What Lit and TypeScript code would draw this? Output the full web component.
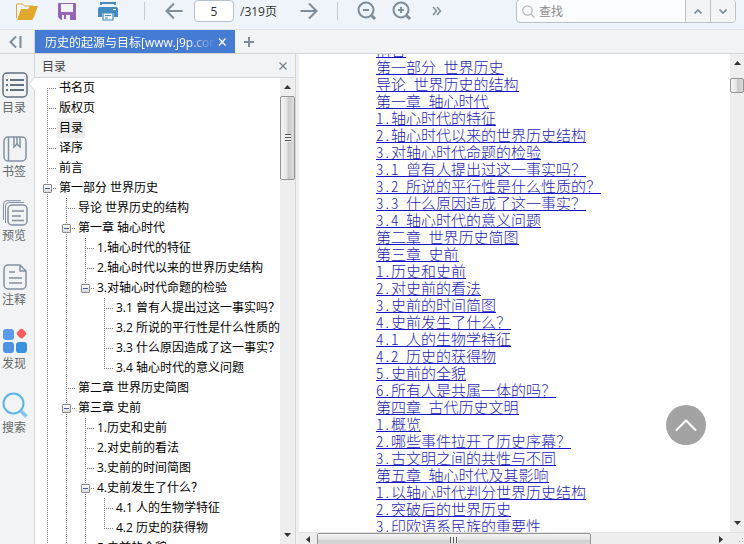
import { LitElement, html, css, svg, nothing } from "lit";
import { customElement, property } from "lit/decorators.js";
import { classMap } from "lit/directives/class-map.js";

interface TreeNode {
  label: string;
  selected?: boolean;
  children?: TreeNode[];
}

interface TreeRow {
  label: string;
  selected: boolean;
  expanded: boolean;
  /** One entry per level: whether that level's guide goes on below this row. */
  guides: boolean[];
}

const OUTLINE: TreeNode[] = [
  { label: "书名页" },
  { label: "版权页" },
  { label: "目录", selected: true },
  { label: "译序" },
  { label: "前言" },
  {
    label: "第一部分 世界历史",
    children: [
      { label: "导论 世界历史的结构" },
      {
        label: "第一章 轴心时代",
        children: [
          { label: "1.轴心时代的特征" },
          { label: "2.轴心时代以来的世界历史结构" },
          {
            label: "3.对轴心时代命题的检验",
            children: [
              { label: "3.1 曾有人提出过这一事实吗？" },
              { label: "3.2 所说的平行性是什么性质的？" },
              { label: "3.3 什么原因造成了这一事实？" },
              { label: "3.4 轴心时代的意义问题" },
            ],
          },
        ],
      },
      { label: "第二章 世界历史简图" },
      {
        label: "第三章 史前",
        children: [
          { label: "1.历史和史前" },
          { label: "2.对史前的看法" },
          { label: "3.史前的时间简图" },
          {
            label: "4.史前发生了什么？",
            children: [{ label: "4.1 人的生物学特征" }, { label: "4.2 历史的获得物" }],
          },
          { label: "5.史前的全貌" },
          { label: "6.所有人是共属一体的吗？" },
        ],
      },
      { label: "第四章 古代历史文明" },
    ],
  },
  { label: "第二部分 现在与未来" },
];

const PAGE_LINKS = [
  "前言",
  "第一部分 世界历史",
  "导论 世界历史的结构",
  "第一章 轴心时代",
  "1.轴心时代的特征",
  "2.轴心时代以来的世界历史结构",
  "3.对轴心时代命题的检验",
  "3.1 曾有人提出过这一事实吗？",
  "3.2 所说的平行性是什么性质的？",
  "3.3 什么原因造成了这一事实？",
  "3.4 轴心时代的意义问题",
  "第二章 世界历史简图",
  "第三章 史前",
  "1.历史和史前",
  "2.对史前的看法",
  "3.史前的时间简图",
  "4.史前发生了什么？",
  "4.1 人的生物学特征",
  "4.2 历史的获得物",
  "5.史前的全貌",
  "6.所有人是共属一体的吗？",
  "第四章 古代历史文明",
  "1.概览",
  "2.哪些事件拉开了历史序幕？",
  "3.古文明之间的共性与不同",
  "第五章 轴心时代及其影响",
  "1.以轴心时代判分世界历史结构",
  "2.突破后的世界历史",
  "3.印欧语系民族的重要性",
];

function flatten(nodes: TreeNode[], parents: boolean[] = []): TreeRow[] {
  return nodes.flatMap((node, i) => {
    const guides = [...parents, i < nodes.length - 1];
    const row = {
      label: node.label,
      selected: !!node.selected,
      expanded: !!node.children,
      guides,
    };
    return [row, ...flatten(node.children ?? [], guides)];
  });
}

const shared = css`
  :host,
  * {
    box-sizing: border-box;
  }
  button {
    border: 0;
    padding: 0;
    margin: 0;
    background: none;
    font: inherit;
    color: inherit;
    display: flex;
    align-items: center;
    justify-content: center;
  }
  svg {
    display: block;
    flex: none;
  }
`;

@customElement("tool-bar")
export class ToolBar extends LitElement {
  static styles = [
    shared,
    css`
      :host {
        display: flex;
        align-items: center;
        flex: none;
        height: 30px;
        padding: 0 8px 7px 16px;
        background: #eef4f9;
        border-bottom: 1px solid #dfe4e8;
        color: #7f8c99;
      }
      .files {
        display: flex;
        align-items: center;
        gap: 20px;
      }
      .rule {
        width: 1px;
        height: 18px;
        background: #c3c9cf;
      }
      .rule.first {
        margin: 0 20px 0 24px;
      }
      .rule.second {
        margin: 0 19px;
      }
      .page {
        width: 40px;
        height: 22px;
        margin: 0 6px 0 11px;
        padding: 0;
        border: 1px solid #b9c1c8;
        border-radius: 4px;
        background: #fff;
        text-align: center;
        font: inherit;
        color: #333;
      }
      .total {
        color: #333;
        width: 60px;
      }
      .zooms {
        display: flex;
        gap: 15px;
      }
      .more {
        margin-left: 20px;
      }
      .search {
        display: flex;
        margin-left: auto;
        width: 220px;
        height: 24px;
        border: 1px solid #b9c1c8;
        border-radius: 4px;
        background: #fcfdfe;
        overflow: hidden;
      }
      .search label {
        display: flex;
        align-items: center;
        padding: 0 4px 0 5px;
      }
      .search input {
        flex: 1;
        min-width: 0;
        border: 0;
        padding: 0;
        background: none;
        font: inherit;
      }
      .search input::placeholder {
        color: #8b8b8b;
      }
      .search button {
        width: 25px;
        border-left: 1px solid #b9c1c8;
        background: #f2f4f6;
      }
    `,
  ];

  render() {
    return html`
      <div class="files">
        <button aria-label="打开">
          <svg width="22" height="20" viewBox="0 0 22 20">
            <path d="M.5 17V3h6l2 2h8.500v3" fill="none" stroke="#e0a92e" stroke-width="1" />
            <path d="M1 19L5 8h7l2-3h8l-4 11-2 3z" fill="#e0a92e" />
          </svg>
        </button>
        <button aria-label="保存">
          <svg width="18" height="20" viewBox="0 0 18 20">
            <path d="M0 3a1 1 0 011-1h16a1 1 0 011 1v16H3l-3-3z" fill="#9665b3" />
            <path d="M3 3h12v8H3z" fill="#eef4f9" />
            <path d="M4 14h8v5H4z" fill="#eef4f9" />
            <path d="M6 14h2v4H6z" fill="#9665b3" />
          </svg>
        </button>
        <button aria-label="打印">
          <svg width="24" height="20" viewBox="0 0 24 20">
            <path d="M5 4V2h14v2" fill="none" stroke="#438bc0" stroke-width="2" />
            <path d="M4 6h16a2 2 0 012 2v8h-4v-4H6v4H2V8a2 2 0 012-2z" fill="#438bc0" />
            <path d="M17 8h3v1h-3z" fill="#fff" />
            <path d="M7 12h10v7H7zM9 14.500h6M9 17h3" fill="#eef4f9" stroke="#438bc0" stroke-width="1.200" />
          </svg>
        </button>
      </div>
      <div class="rule first"></div>
      <button aria-label="上一页">
        <svg width="18" height="18" viewBox="0 0 18 18" fill="none" stroke="currentColor" stroke-width="2">
          <path d="M17.500 9H1.500M9 1.500L1.500 9 9 16.500" />
        </svg>
      </button>
      <input class="page" aria-label="页码" value="5" />
      <span class="total">/319页</span>
      <button aria-label="下一页">
        <svg width="18" height="18" viewBox="0 0 18 18" fill="none" stroke="currentColor" stroke-width="2">
          <path d="M.5 9h16M9 1.500L16.500 9 9 16.500" />
        </svg>
      </button>
      <div class="rule second"></div>
      <div class="zooms">
        ${["缩小", "放大"].map(
          (name, i) => html`<button aria-label=${name}>
            <svg width="20" height="20" viewBox="0 0 20 20" fill="none" stroke="currentColor" stroke-width="2">
              <circle cx="9" cy="9" r="7.500" />
              <path d="M14.500 14.500L18 18" stroke-width="3" />
              <path d=${i ? "M6 9h6M9 6v6" : "M6 9h6"} />
            </svg>
          </button>`,
        )}
      </div>
      <button class="more" aria-label="更多">
        <svg width="10" height="10" viewBox="0 0 10 10" fill="none" stroke="currentColor" stroke-width="1.500">
          <path d="M1 1l3.500 4L1 9M5 1l3.500 4L5 9" />
        </svg>
      </button>
      <form class="search">
        <label for="q">
          <svg width="13" height="13" viewBox="0 0 13 13" fill="none" stroke="#b4bac0" stroke-width="1.300">
            <circle cx="5.500" cy="5.500" r="4.700" />
            <path d="M9 9l3.500 3.500" />
          </svg>
        </label>
        <input id="q" placeholder="查找" aria-label="查找" />
        <button type="button" aria-label="上一个">
          <svg width="8" height="5" viewBox="0 0 8 5" fill="none" stroke="currentColor" stroke-width="1.700">
            <path d="M.5 4.500L4 1l3.500 3.500" />
          </svg>
        </button>
        <button type="button" aria-label="下一个">
          <svg width="8" height="5" viewBox="0 0 8 5" fill="none" stroke="currentColor" stroke-width="1.700">
            <path d="M.5.5L4 4 7.500.5" />
          </svg>
        </button>
      </form>
    `;
  }
}

@customElement("tab-strip")
export class TabStrip extends LitElement {
  static styles = [
    shared,
    css`
      :host {
        display: flex;
        align-items: stretch;
        flex: none;
        height: 24px;
        background: #f1f3f5;
        border-bottom: 1px solid #d3d6d9;
        color: #7f8c99;
      }
      .collapse {
        width: 35px;
        padding-right: 4px;
        border-right: 1px solid #d3d6d9;
      }
      .tab {
        display: flex;
        align-items: center;
        width: 200px;
        padding: 0 8px 0 10px;
        background: #467bd3;
        color: #fff;
      }
      .title {
        flex: 1;
        min-width: 0;
        overflow: hidden;
        white-space: nowrap;
        mask-image: linear-gradient(to right, #000 84%, transparent);
      }
      .tab button {
        margin-left: 2px;
      }
      .add {
        width: 28px;
      }
    `,
  ];

  render() {
    return html`
      <button class="collapse" aria-label="收起侧栏">
        <svg width="13" height="12" viewBox="0 0 13 12" fill="none" stroke="currentColor" stroke-width="2">
          <path d="M7 .5L1.500 6 7 11.500M11.500 0v12" />
        </svg>
      </button>
      <div class="tab">
        <span class="title">历史的起源与目标[www.j9p.com]</span>
        <button aria-label="关闭标签">
          <svg width="10" height="8" viewBox="0 0 10 8" fill="none" stroke="currentColor" stroke-width="1.300">
            <path d="M2 .5l6.500 7M8.500.5L2 7.500" />
          </svg>
        </button>
      </div>
      <button class="add" aria-label="新建标签">
        <svg width="10" height="10" viewBox="0 0 10 10" stroke="currentColor" stroke-width="2">
          <path d="M0 5h10M5 0v10" />
        </svg>
      </button>
    `;
  }
}

const frame = svg`<rect x="1" y="1" width="24" height="24" rx="4" />`;

const SIDE_ITEMS = [
  {
    label: "目录",
    active: true,
    icon: svg`${frame}<path stroke-width="2" d="M4 8h2M8 8h14M4 13h2M8 13h14M4 18h2M8 18h14" />`,
  },
  {
    label: "书签",
    icon: svg`<rect x="2" y="1" width="22" height="24" rx="4" /><path d="M6.500 1v24M12 1v10l3-3 3 3V1" /><path d="M15 1v7" />`,
  },
  {
    label: "预览",
    icon: svg`<rect x="6" y="5" width="19" height="20" rx="4" /><path d="M3.500 23V6a3.500 3.500 0 013.500-3.500h15M1.500 20V4A3.500 3.500 0 015 .7h14" stroke-width="1" /><path d="M10 11h12M10 16h9M10 20.500h12" stroke-width="1.500" />`,
  },
  {
    label: "注释",
    icon: svg`<path d="M6 1h12l6 6v14a4 4 0 01-4 4H6a4 4 0 01-4-4V5a4 4 0 014-4zM18 1v6h6" /><path d="M7 8h6M7 14h13M7 19h13" stroke-width="1.500" />`,
  },
  {
    label: "发现",
    icon: svg`<g stroke="none"><rect x="1" y="1" width="11" height="11" rx="3" fill="#5b9cf2" /><rect x="1" y="14" width="11" height="11" rx="3" fill="#4f93e8" /><rect x="14" y="14" width="11" height="11" rx="3" fill="#3a92de" /><rect x="15.500" y="1.500" width="8" height="8" rx="2.500" fill="#fa5a5a" transform="rotate(45 19.500 5.500)" /></g>`,
  },
  {
    label: "搜索",
    icon: svg`<g stroke="#5cb5e6"><circle cx="11.500" cy="11.500" r="10" stroke-width="2" /><path d="M19 19l5.500 5.500" stroke-width="3.500" stroke="#82c4ea" /></g>`,
  },
];

@customElement("side-nav")
export class SideNav extends LitElement {
  static styles = [
    shared,
    css`
      :host {
        display: flex;
        flex-direction: column;
        gap: 18px;
        flex: none;
        width: 35px;
        padding: 18px 0 0 2px;
        background: #f1f3f5;
        border-right: 1px solid #d3d6d9;
        color: #646668;
      }
      .item {
        position: relative;
        flex-direction: column;
        align-items: flex-start;
        line-height: 20px;
      }
      .icon {
        fill: none;
        stroke: #8491a0;
        stroke-width: 1.500;
      }
      .active .icon {
        stroke: #62717f;
      }
      .notch {
        position: absolute;
        right: -1px;
        top: 5px;
        fill: #fff;
        stroke: #d3d6d9;
      }
    `,
  ];

  render() {
    return SIDE_ITEMS.map(
      (item) => html`<button class=${classMap({ item: true, active: !!item.active })}>
        <svg class="icon" width="26" height="26" viewBox="0 0 26 26">${item.icon}</svg>
        <span>${item.label}</span>
        ${item.active
          ? html`<svg class="notch" width="7" height="14" viewBox="0 0 7 14"><path d="M7 0L1 7l6 7" /></svg>`
          : nothing}
      </button>`,
    );
  }
}

@customElement("scroll-track")
export class ScrollTrack extends LitElement {
  @property({ reflect: true }) axis: "x" | "y" = "y";
  /** Thumb length in pixels. */
  @property({ type: Number }) length = 16;
  /** Distance scrolled along the track, in pixels. */
  @property({ type: Number }) offset = 0;
  @property({ type: Boolean }) grip = false;

  static styles = css`
    :host,
    * {
      box-sizing: border-box;
    }
    :host {
      display: flex;
      flex-direction: column;
      flex: none;
      width: 15px;
      background: #eeeeee;
    }
    :host([axis="x"]) {
      flex-direction: row;
      flex: 1;
      width: auto;
      height: 12px;
    }
    .end {
      flex: none;
      display: flex;
      align-items: center;
      justify-content: center;
      height: 18px;
    }
    .last {
      margin-top: auto;
    }
    .x.end {
      width: 18px;
      height: 12px;
    }
    .x.last {
      margin: 0 0 0 auto;
    }
    .arrow {
      display: block;
      fill: #333;
    }
    .thumb {
      flex: none;
      display: flex;
      align-items: center;
      justify-content: center;
      border: 1px solid #949494;
      border-radius: 2px;
      background: linear-gradient(to right, #f5f5f5, #e6e6e6 45%, #c9c9cb 55%, #dcdcdc);
    }
    .x.thumb {
      height: 14px;
      background: linear-gradient(#f5f5f5, #e4e4e4 45%, #cfcfd1 55%, #dcdcdc);
    }
    .lines {
      width: 6px;
      height: 8px;
      background: repeating-linear-gradient(#555 0 1px, #eee 1px 3px);
    }
    .x .lines {
      width: 8px;
      height: 6px;
      background: repeating-linear-gradient(to right, #555 0 1px, #eee 1px 3px);
    }
  `;

  render() {
    const x = this.axis === "x";
    const size = x
      ? `width:${this.length}px;margin-left:${this.offset}px`
      : `height:${this.length}px;margin-top:${this.offset}px`;
    const arrow = (d: string) =>
      html`<svg class="arrow" width=${x ? 4 : 7} height=${x ? 7 : 4}><path d=${d} /></svg>`;
    return html`
      <div class=${classMap({ end: true, x })}>${arrow(x ? "M4 0v7L0 3.500z" : "M0 4h7L3.500 0z")}</div>
      <div class=${classMap({ thumb: true, x })} style=${size}>
        ${this.grip ? html`<div class="lines"></div>` : nothing}
      </div>
      <div class=${classMap({ end: true, last: true, x })}>${arrow(x ? "M0 0v7l4-3.500z" : "M0 0h7L3.500 4z")}</div>
    `;
  }
}

@customElement("outline-panel")
export class OutlinePanel extends LitElement {
  static styles = [
    shared,
    css`
      :host {
        display: flex;
        flex-direction: column;
        flex: none;
        width: 261px;
        min-height: 0;
        background: #fff;
        border-right: 1px solid #d3d6d9;
      }
      .head {
        display: flex;
        align-items: center;
        justify-content: space-between;
        flex: none;
        height: 24px;
        padding: 0 8px 0 7px;
        background: #f1f3f5;
        border-bottom: 1px solid #d3d6d9;
        color: #444;
      }
      .body {
        flex: 1;
        display: flex;
        min-height: 0;
      }
      .tree {
        flex: 1;
        min-width: 0;
        overflow: hidden;
        margin: 0;
        padding: 0 0 0 3px;
        list-style: none;
        color: #000;
      }
      .row {
        display: flex;
        height: 20px;
        line-height: 20px;
        white-space: nowrap;
      }
      .cell {
        flex: none;
        display: grid;
        grid-template: 10px 10px / 9px 10px;
        width: 19px;
      }
      .up,
      .down {
        grid-column: 2;
        width: 1px;
        background: repeating-linear-gradient(#777 0 1px, transparent 1px 2px);
      }
      .up {
        grid-row: 1;
      }
      .down {
        grid-row: 2;
      }
      .across {
        grid-area: 2 / 2;
        height: 1px;
        width: 9px;
        background: repeating-linear-gradient(to right, #777 0 1px, transparent 1px 2px);
      }
      .toggle {
        grid-area: 1 / 1 / 3 / 3;
        place-self: center start;
        z-index: 1;
        width: 9px;
        height: 9px;
        margin: 1px 0 0 5px;
        border: 1px solid #8c8c8c;
        border-radius: 1px;
        background: linear-gradient(#fff, #dcdcdc);
      }
      .minus {
        width: 5px;
        height: 1px;
        background: #3c5c9c;
      }
      .label {
        padding: 0 2px;
      }
      .selected {
        background: #ededed;
      }
    `,
  ];

  render() {
    return html`
      <div class="head">
        <span>目录</span>
        <button aria-label="关闭目录">
          <svg width="8" height="8" viewBox="0 0 8 8" stroke="#75808a" stroke-width="1.200">
            <path d="M.5.5l7 7M7.500.5l-7 7" />
          </svg>
        </button>
      </div>
      <div class="body">
        <ul class="tree">
          ${flatten(OUTLINE).map((row, r) => {
            const own = row.guides.length - 1;
            return html`<li class="row">
              ${row.guides.map(
                (more, level) => html`<span class="cell">
                  ${(level === own ? r > 0 : more) ? html`<span class="up"></span>` : nothing}
                  ${more ? html`<span class="down"></span>` : nothing}
                  ${level === own ? html`<span class="across"></span>` : nothing}
                  ${level === own && row.expanded
                    ? html`<button class="toggle" aria-label="折叠"><span class="minus"></span></button>`
                    : nothing}
                </span>`,
              )}
              <span class=${classMap({ label: true, selected: row.selected })}>${row.label}</span>
            </li>`;
          })}
        </ul>
        <scroll-track length="84" grip></scroll-track>
      </div>
    `;
  }
}

@customElement("document-view")
export class DocumentView extends LitElement {
  static styles = [
    shared,
    css`
      :host {
        flex: 1;
        min-width: 0;
        min-height: 0;
        display: grid;
        grid-template: minmax(0, 1fr) 12px / minmax(0, 1fr) 14px;
        border-left: 3px solid #f0f0f0;
      }
      .page {
        position: relative;
        overflow: hidden;
        background: #fff;
      }
      .links {
        margin: -13px 0 0;
        padding: 0 0 0 77px;
        list-style: none;
      }
      .entry {
        display: flex;
        height: 17px;
      }
      a {
        color: #1e1eb4;
        border-bottom: 1px solid #1414c8;
        text-decoration: none;
        font: 300 15px/17px "Noto Sans CJK SC", sans-serif;
        font-feature-settings: "hwid";
        white-space: pre;
      }
      .vertical {
        width: 14px;
      }
      .foot {
        grid-column: 1 / 3;
        display: flex;
        overflow: hidden;
        background: #eee;
        border-top: 1px solid #e3e3e3;
      }
      .sizer {
        width: 14px;
        padding: 5px 0 0 8px;
      }
      .top {
        position: absolute;
        right: 24px;
        bottom: 87px;
        width: 40px;
        height: 40px;
        border-radius: 50%;
        background: #a3a3a3;
      }
    `,
  ];

  render() {
    return html`
      <div class="page">
        <ul class="links">
          ${PAGE_LINKS.map((text) => html`<li class="entry"><a href="#">${text}</a></li>`)}
        </ul>
        <button class="top" aria-label="返回顶部">
          <svg width="22" height="14" viewBox="0 0 22 14" fill="none" stroke="#fff" stroke-width="2">
            <path d="M1.500 12L11 2.500l9.500 9.500" stroke-linecap="round" />
          </svg>
        </button>
      </div>
      <scroll-track class="vertical" length="15" offset="6"></scroll-track>
      <div class="foot">
        <scroll-track axis="x" length="274" grip></scroll-track>
        <div class="sizer">
          <svg width="6" height="6" fill="#aaa">
            <path d="M4 0h1v1H4zM4 3h1v1H4zM1 3h1v1H1z" />
          </svg>
        </div>
      </div>
    `;
  }
}

@customElement("app-root")
export class AppRoot extends LitElement {
  static styles = css`
    :host {
      display: flex;
      flex-direction: column;
      height: 100vh;
      overflow: hidden;
      font: 12px "Open Sans", "Noto Sans CJK SC", sans-serif;
    }
    .main {
      flex: 1;
      display: flex;
      min-height: 0;
    }
  `;

  render() {
    return html`
      <tool-bar></tool-bar>
      <tab-strip></tab-strip>
      <div class="main">
        <side-nav></side-nav>
        <outline-panel></outline-panel>
        <document-view></document-view>
      </div>
    `;
  }
}
